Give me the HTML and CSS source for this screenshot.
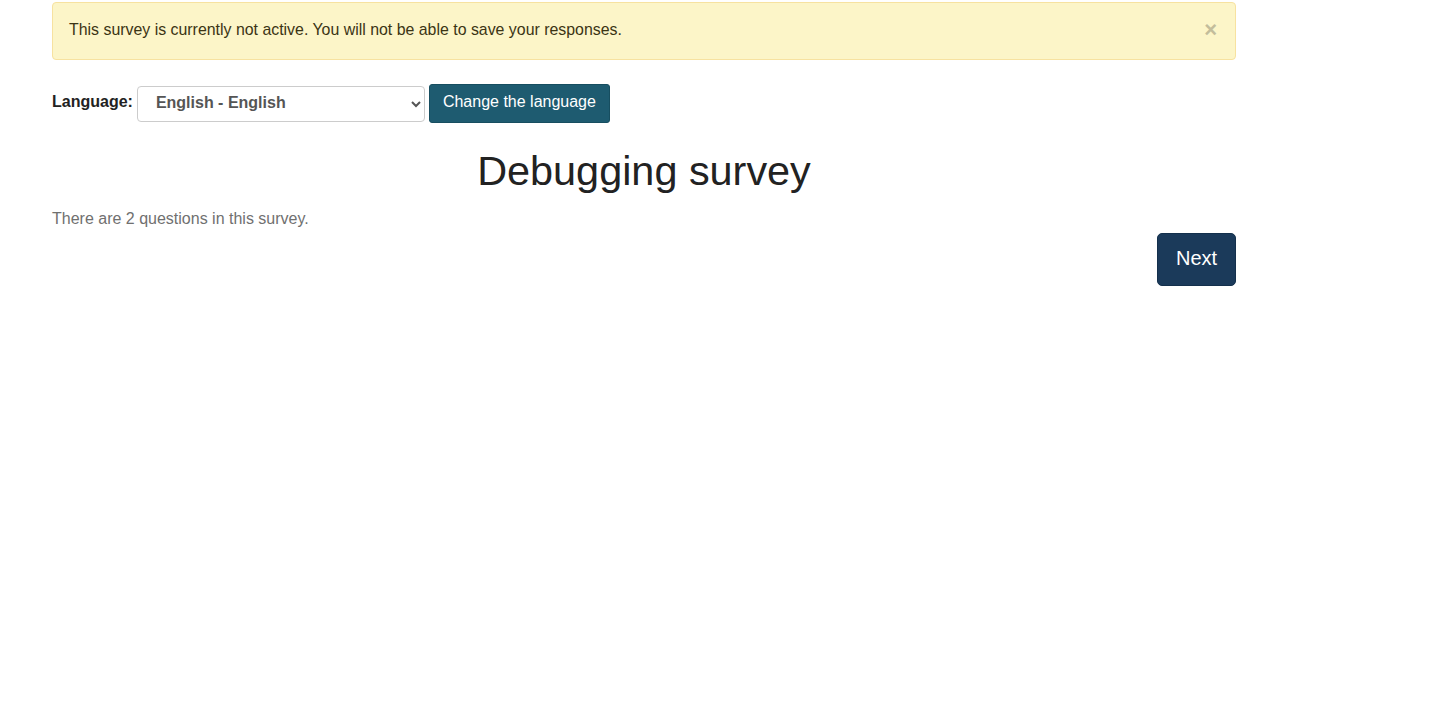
FILE: index.html
```html
<!DOCTYPE html>
<html lang="en">

<head>
    <meta charset="UTF-8">
    <meta name="viewport" content="width=device-width, initial-scale=1.0">
    <title>Debugging survey</title>
    <link rel="stylesheet" href="styles.css">
</head>

<body>
    <div class="container">
        <!-- inactive warning -->
        <div class="alert">
            <span>This survey is currently not active. You will not be able to save your responses.</span>
            <button class="close">&times;</button>
        </div>

        <!-- language switch -->
        <form class="lang-form">
            <label for="lang">Language:</label>
            <select id="lang" class="lang-select">
                <option>English - English</option>
            </select>
            <button type="button" class="btn-lang">Change the language</button>
        </form>

        <h1 class="title">Debugging survey</h1>
        <p class="count">There are 2 questions in this survey.</p>

        <div class="nav">
            <button type="button" class="btn-next">Next</button>
        </div>
    </div>
</body>

</html>
```

FILE: styles.css
```css
body {
    margin: 0;
    font-family: "Liberation Sans", Arial, sans-serif;
    color: #222;
    background: #fff;
}

.container {
    width: 1184px;
    margin-left: 52px;
    padding-top: 2px;
}

.alert {
    display: flex;
    align-items: center;
    justify-content: space-between;
    height: 54px;
    padding: 0 16px 2px;
    background-color: #fcf5c8;
    border: 1px solid #f7e2a0;
    border-radius: 4px;
    color: #3b3414;
    font-size: 15.9px;
}

.close {
    border: none;
    background: none;
    padding: 0;
    font-size: 22px;
    font-weight: bold;
    color: #c3bd9b;
    line-height: 1;
    cursor: pointer;
    margin-right: 2px;
}

.lang-form {
    display: flex;
    align-items: center;
    margin-top: 24px;
    height: 39px;
}

.lang-form label {
    font-weight: bold;
    font-size: 16px;
    margin-right: 4px;
    padding-bottom: 4px;
    color: #222;
}

.lang-select {
    width: 288px;
    height: 36px;
    padding: 0 14px 3px;
    border: 1px solid #ccc;
    border-radius: 4px;
    background: #fff;
    font-family: inherit;
    font-size: 16px;
    font-weight: bold;
    color: #555;
}

.btn-lang {
    margin-left: 4px;
    height: 39px;
    padding: 0 13px 3px;
    border: 1px solid #174e60;
    border-radius: 3px;
    background-color: #1e5b70;
    color: #fff;
    font-family: inherit;
    font-size: 16px;
}

.title {
    text-align: center;
    font-weight: normal;
    font-size: 41.4px;
    margin: 26px 0 0;
    line-height: 44px;
}

.count {
    margin: 17px 0 0;
    font-size: 16px;
    color: #707070;
}

.nav {
    display: flex;
    justify-content: flex-end;
    margin-top: 5px;
}

.btn-next {
    width: 79px;
    height: 53px;
    padding-bottom: 4px;
    border: 1px solid #14304c;
    border-radius: 5px;
    background-color: #1b3a5a;
    color: #fff;
    font-family: inherit;
    font-size: 20px;
}
```
